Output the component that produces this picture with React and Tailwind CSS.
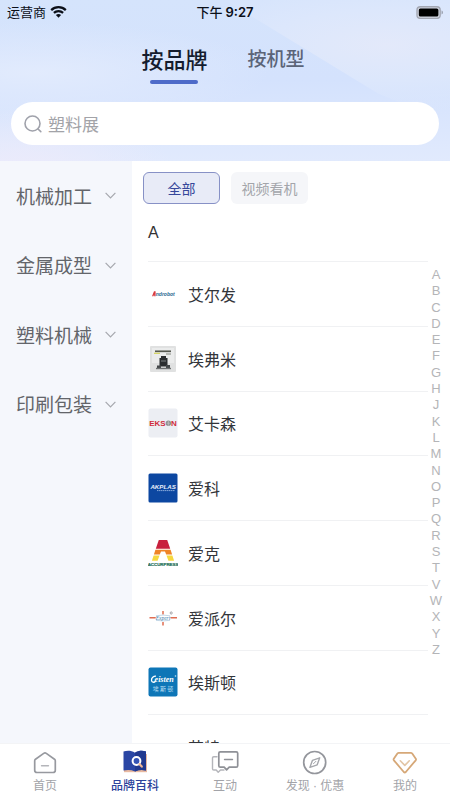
import React, { useState } from "react";

const categories = ["机械加工", "金属成型", "塑料机械", "印刷包装"];
const letters = "ABCDEFGHJKLMNOPQRSTVWXYZ".split("");

const WifiIcon = () => (
    <svg width="17" height="12" viewBox="0 0 17 12" fill="none" stroke="#0b0f18" aria-hidden="true">
        <path d="M1.2 4.1a10.4 10.4 0 0 1 14.6 0" strokeWidth="2.2" />
        <path d="M3.9 6.9a6.6 6.6 0 0 1 9.2 0" strokeWidth="2.2" />
        <path d="M8.5 11.8 5.9 9.1a3.8 3.8 0 0 1 5.2 0z" fill="#0b0f18" stroke="none" />
    </svg>
);

const BatteryIcon = () => (
    <svg width="27" height="13" viewBox="0 0 27 13" aria-hidden="true">
        <rect x="1" y="0.8" width="23.2" height="11.6" rx="3.4" fill="#d3d7e2" stroke="#a3a7b3" strokeWidth="1.4" />
        <rect x="2.8" y="2.4" width="19.6" height="8.2" rx="1.6" fill="#000" />
        <path d="M25.6 4.6v3.8c.8-.3 1.2-1 1.2-1.9s-.4-1.6-1.2-1.9z" fill="#8e93a0" />
    </svg>
);

const SearchIcon = () => (
    <svg width="18" height="18" viewBox="0 0 18 18" fill="none" stroke="#a0a2ab" strokeWidth="1.6" strokeLinecap="round" aria-hidden="true">
        <circle cx="8.5" cy="8.5" r="7.5" />
        <path d="m14 14 2.8 2.6" />
    </svg>
);

const ChevronIcon = () => (
    <svg width="11" height="7" viewBox="0 0 11 7" fill="none" stroke="#a6a8ae" strokeWidth="1.2" aria-hidden="true">
        <path d="M.6.8 5.5 5.8 10.4.8" />
    </svg>
);

const LogoAierfa = () => (
    <svg width="30" height="30" viewBox="0 0 30 30" aria-hidden="true">
        <path d="M4 17.2 6 12.2h1.6v5H6.2v-1.6L5.4 17.2z" fill="#d93a3f" />
        <text x="7.8" y="16.8" fontSize="5" fontWeight="700" fontStyle="italic" fill="#27678f" fontFamily="Liberation Sans, sans-serif">ndrobot</text>
    </svg>
);

const LogoAifumi = () => (
    <svg width="30" height="30" viewBox="0 0 30 30" aria-hidden="true">
        <rect x="2" y="2" width="26" height="26" rx="1" fill="#e0e1e1" />
        <rect x="4" y="4" width="22" height="15" fill="#ebecec" />
        <path d="M7 7.300h16" stroke="#55584f" strokeWidth="1.7" />
        <path d="M6 9.300h6" stroke="#d4d45a" strokeWidth="1.2" />
        <path d="M18 10h5" stroke="#84877f" strokeWidth="1" />
        <path d="M13 12h5v2h1.500v8.500h-8V14H13z" fill="#2b2e30" />
        <path d="M9 21.500h4V25H9zM18 21h4v4h-4z" fill="#44484a" />
        <path d="M8 24.500h15" stroke="#6d7071" strokeWidth="1.4" />
        <path d="M13 17h5" stroke="#7c8183" strokeWidth="1" />
    </svg>
);

const LogoEkson = () => (
    <svg width="30" height="30" viewBox="0 0 30 30" aria-hidden="true">
        <rect width="29" height="29" x=".5" y=".5" rx="2" fill="#eceef3" />
        <g fontSize="8" fontWeight="700" fill="#d02c3b" fontFamily="Liberation Sans, sans-serif">
            <text x="1.2" y="18">EKS</text>
            <text x="23" y="18">N</text>
        </g>
        <circle cx="20.4" cy="15.2" r="2.7" fill="#8e9192" />
        <path d="M18.8 15.2H22M20.4 12.500v5.400" stroke="#c7c9c8" strokeWidth=".6" />
    </svg>
);

const LogoAkplas = () => (
    <svg width="30" height="30" viewBox="0 0 30 30" aria-hidden="true">
        <rect width="29" height="29" x=".5" y=".5" rx="1.5" fill="#0c47a1" />
        <text x="2.4" y="15.8" fontSize="6.2" fontWeight="700" fontStyle="italic" fill="#eaf1fb" fontFamily="Liberation Sans, sans-serif">AKPLAS</text>
        <path d="M9 17.600h18" stroke="#86a8da" strokeWidth="1" strokeDasharray="1.5 .5" />
    </svg>
);

const LogoAccurpress = () => (
    <svg width="30" height="30" viewBox="0 0 30 30" aria-hidden="true">
        <path d="M10.8 2h8.400l3 8.800H7.800z" fill="#c8203c" />
        <path d="M7.400 11.800h15.200l1.500 4.700h-5.900L17 13.500h-4l-1.200 3H5.900z" fill="#ef8426" />
        <path d="M5.600 17.500h5.900l-1.900 5.300H3.900zM18.500 17.500h5.900l1.700 5.300h-5.700z" fill="#f6d83e" />
        <text x="15" y="28.2" textAnchor="middle" fontSize="4.4" fontWeight="700" fill="#1d6e58" stroke="#1d6e58" strokeWidth=".2" fontFamily="Liberation Sans, sans-serif">ACCURPRESS</text>
    </svg>
);

const LogoExpert = () => (
    <svg width="30" height="30" viewBox="0 0 30 30" aria-hidden="true">
        <path d="M1.5 14.800h6.200M22.500 14.800h6.500M15 8v3.500M15 19v3.500" stroke="#df6d52" strokeWidth="1.5" />
        <path d="M8 12.800q7-1.500 14 0M8 17.300q7 1.200 14 0" fill="none" stroke="#a9c6dd" strokeWidth=".7" />
        <text x="15" y="16.6" textAnchor="middle" fontSize="5.4" fontStyle="italic" fill="#3d7cab" fontFamily="Liberation Serif, serif">Expert</text>
        <circle cx="23.2" cy="10" r="1.1" fill="none" stroke="#83848b" strokeWidth=".7" />
    </svg>
);

const LogoEstun = () => (
    <svg width="30" height="30" viewBox="0 0 30 30" aria-hidden="true">
        <rect width="29" height="29" x=".5" y=".5" rx="2" fill="#0e76b7" />
        <path d="M8 9.200C5.500 9 3.400 11 3.500 13.200c.2 2.300 2.500 2.700 4 1" fill="none" stroke="#fff" strokeWidth="1.3" />
        <text x="6.6" y="15.4" fontSize="8" fontWeight="700" fontStyle="italic" fill="#fff" fontFamily="Liberation Serif, serif">eisten</text>
        <circle cx="27.5" cy="9" r=".8" fill="#cbe5f5" />
        <text x="15" y="23.8" textAnchor="middle" fontSize="6" fill="#b9dcf2" fontFamily="Noto Sans CJK SC, sans-serif">埃 斯 顿</text>
    </svg>
);

const brands = [
    { name: "艾尔发", Logo: LogoAierfa },
    { name: "埃弗米", Logo: LogoAifumi },
    { name: "艾卡森", Logo: LogoEkson },
    { name: "爱科", Logo: LogoAkplas },
    { name: "爱克", Logo: LogoAccurpress },
    { name: "爱派尔", Logo: LogoExpert },
    { name: "埃斯顿", Logo: LogoEstun },
    { name: "艾特", Logo: null },
];

const HomeIcon = () => (
    <svg width="26" height="26" viewBox="0 0 26 26" fill="none" stroke="#97999f" strokeWidth="1.7" strokeLinejoin="round" strokeLinecap="round" aria-hidden="true">
        <path d="M11.700 3.400 3.500 9.200c-.6.5-.8.9-.8 1.600v9.400c0 1.500.8 2.300 2.300 2.300h16c1.500 0 2.300-.8 2.300-2.300v-9.400c0-.7-.2-1.100-.8-1.600l-8.200-5.800c-.9-.6-1.700-.6-2.600 0z" />
        <path d="M9.500 15.800h7" strokeWidth="1.4" stroke="#b4b5ba" />
    </svg>
);

const BookIcon = () => (
    <svg width="26" height="26" viewBox="0 0 26 26" aria-hidden="true">
        <path d="M2 4h23v18.200H2z" fill="#e8b9a0" />
        <path d="M1.500 1.600c4-1.200 7.800-1 11.500 1.200 3.700-2.200 7.500-2.400 11-1.200v19c-3.500-1-7.300-.7-11 .8-3.700-1.500-7.500-1.800-11.500-.8z" fill="#2a46a4" />
        <path d="M13 2.800c3.700-2.200 7.500-2.400 11-1.200v19c-3.500-1-7.300-.7-11 .8z" fill="#21398f" />
        <circle cx="14.5" cy="11" r="3.9" fill="#3554b5" stroke="#fff" strokeWidth="2" />
        <path d="m17.600 14.200 2.200 2.400" stroke="#f0b694" strokeWidth="2.2" strokeLinecap="round" />
    </svg>
);

const ChatIcon = () => (
    <svg width="28" height="26" viewBox="0 0 28 26" fill="none" strokeLinejoin="round" strokeLinecap="round" aria-hidden="true">
        <path d="M6 6.700H2.800c-.9 0-1.300.4-1.300 1.300v10.700c0 .9.400 1.300 1.300 1.300h2.400l2 2.300 2.300-2.300h3.500" stroke="#b4b5ba" strokeWidth="1.4" />
        <path d="M9.300 1.800h15.900c1 0 1.500.5 1.500 1.500v12.400c0 1-.5 1.500-1.500 1.500h-7l-2.600 2.600-2.400-2.600H9.300c-1 0-1.500-.5-1.500-1.500V3.300c0-1 .5-1.500 1.500-1.500z" stroke="#8f9197" strokeWidth="1.7" />
        <path d="M13.500 9.500h8" stroke="#8f9197" strokeWidth="1.4" />
    </svg>
);

const CompassIcon = () => (
    <svg width="26" height="26" viewBox="0 0 26 26" fill="none" strokeLinejoin="round" aria-hidden="true">
        <circle cx="12.7" cy="12.5" r="11" stroke="#94969c" strokeWidth="1.7" />
        <path d="m17.700 7.800-2.500 7-7.300 2.600 2.500-7z" stroke="#a5a7ac" strokeWidth="1.4" />
        <path d="m11.200 14 3-3" stroke="#a5a7ac" strokeWidth="1" />
    </svg>
);

const GemIcon = () => (
    <svg width="26" height="26" viewBox="0 0 26 26" fill="none" strokeLinejoin="round" strokeLinecap="round" aria-hidden="true">
        <path d="M6.800 2.800h12c.6 0 1 .2 1.400.7l3.600 5.300c.4.6.3 1-.1 1.500L13.800 22c-.7.700-1.300.7-2 0L1.900 10.300c-.4-.5-.5-.9-.1-1.500l3.600-5.300c.4-.5.8-.7 1.400-.7z" stroke="#d6a878" strokeWidth="1.8" />
        <path d="m8.300 10.800 4.500 4.600 4.500-4.600" stroke="#e2c5a5" strokeWidth="1.6" />
    </svg>
);

const navItems = [
    { key: "home", label: "首页", Icon: HomeIcon },
    { key: "brand", label: "品牌百科", Icon: BookIcon },
    { key: "chat", label: "互动", Icon: ChatIcon },
    {
        key: "discover",
        // the CJK font draws a full-width middle dot, so the dot gets a Latin one
        label: (
            <span>
                发现<span className="font-['Liberation_Sans',sans-serif]"> · </span>优惠
            </span>
        ),
        Icon: CompassIcon,
    },
    { key: "mine", label: "我的", Icon: GemIcon },
];

const App = () => {
    const [keyword, setKeyword] = useState("");
    const [filter, setFilter] = useState("全部");

    return (
        <div className="flex h-screen flex-col overflow-hidden bg-white font-['Noto_Sans_CJK_SC',sans-serif]">
            {/* Header */}
            <header className="relative shrink-0 bg-linear-to-b from-[#d5e4fc] via-[#d4e2fd] to-[#e1eafd] pb-4">
                <div className="absolute inset-0 bg-[radial-gradient(ellipse_at_8%_45%,#e2ebfd_0%,transparent_40%)]" />
                <div className="absolute inset-0 bg-[radial-gradient(ellipse_at_86%_28%,#e3e9fa_0%,#dce7fc_22%,transparent_42%)] [clip-path:polygon(50%_0,100%_0,100%_100%,91%_66%,84%_58%)]" />
                <div className="absolute inset-0 bg-[radial-gradient(ellipse_at_5%_105%,#ecebfb_0%,transparent_25%)]" />

                <div className="relative">
                    <div className="grid h-6 grid-cols-3 items-center px-[7px] text-[13px] leading-6 text-[#0b0f18]">
                        <div className="flex items-center gap-1">
                            <span>运营商</span>
                            <WifiIcon />
                        </div>
                        <div className="text-center font-medium">
                            下午 <span className="font-['Inter',sans-serif] font-semibold">9:27</span>
                        </div>
                        <div className="flex justify-end">
                            <BatteryIcon />
                        </div>
                    </div>

                    <div className="flex h-[78px] justify-center gap-10 pt-[18px] pr-1">
                        <button type="button" className="flex flex-col items-center text-[22px] leading-8 font-medium text-[#141c2e]">
                            按品牌
                            <span className="mt-1.5 h-1 w-12 rounded-full bg-[#4e6bc9]" />
                        </button>
                        <button type="button" className="flex flex-col items-center text-[19px] leading-8 font-medium text-[#5b6478]">
                            按机型
                        </button>
                    </div>

                    <label className="mx-[11px] flex h-[43px] items-center gap-1.5 rounded-full bg-white pl-[13px]">
                        <SearchIcon />
                        <input
                            type="text"
                            aria-label="搜索"
                            placeholder="塑料展"
                            value={keyword}
                            onChange={(e) => setKeyword(e.target.value)}
                            className="min-w-0 flex-1 text-[17px] outline-none placeholder:text-[#a2a3a8]"
                        />
                    </label>
                </div>
            </header>

            {/* Content */}
            <main className="flex min-h-0 flex-1">
                <aside className="w-[132px] shrink-0 bg-[#f5f7fc]">
                    <div className="grid h-[278px] auto-rows-fr">
                        {categories.map((item) => (
                            <button
                                key={item}
                                type="button"
                                className="flex w-full items-center justify-between px-4 text-[19px] text-[#63656a]"
                            >
                                {item}
                                <ChevronIcon />
                            </button>
                        ))}
                    </div>
                </aside>

                <section className="relative min-w-0 flex-1 overflow-hidden pr-[22px] pl-4">
                    <div className="-ml-[5px] flex gap-[11px] pt-[11px]">
                        {["全部", "视频看机"].map((item) => (
                            <button
                                key={item}
                                type="button"
                                onClick={() => setFilter(item)}
                                className={
                                    filter === item
                                        ? "h-8 w-[77px] rounded-md border border-[#8791c6] bg-[#e8ebf7] text-sm text-[#36479a]"
                                        : "h-8 w-[77px] rounded-md bg-[#f5f6f9] text-sm text-[#a3a5aa]"
                                }
                            >
                                {item}
                            </button>
                        ))}
                    </div>

                    <h2 className="flex h-[57px] items-center font-['Liberation_Sans',sans-serif] text-base text-[#333]">A</h2>

                    <ul className="grid h-[518px] auto-rows-fr">
                        {brands.map(({ name, Logo }) => (
                            <li key={name} className="flex items-center gap-2.5 border-t border-[#f0f1f3] text-base text-[#33353a]">
                                <span className="size-[30px]">{Logo && <Logo />}</span>
                                {name}
                            </li>
                        ))}
                    </ul>

                    {/* Letter index floats over the right edge of the list */}
                    <nav aria-label="字母索引" className="absolute top-[106px] right-1 flex h-[391px] w-5 flex-col justify-between text-center font-['Liberation_Sans',sans-serif] text-[13px] leading-4 text-[#b4b5b8]">
                        {letters.map((letter) => (
                            <a key={letter} href={`#${letter}`}>
                                {letter}
                            </a>
                        ))}
                    </nav>
                </section>
            </main>

            {/* Bottom navigation */}
            <nav className="grid h-[57px] shrink-0 grid-cols-5 border-t border-[#f3f4f6] bg-white">
                {navItems.map(({ key, label, Icon }) => (
                    <a
                        key={key}
                        href={`#${key}`}
                        className={
                            key === "brand"
                                ? "flex flex-col items-center pt-1.5 text-xs leading-[18px] font-medium text-[#2c439c]"
                                : "flex flex-col items-center pt-1.5 text-xs leading-[18px] text-[#a2a3a8]"
                        }
                    >
                        <Icon />
                        {label}
                    </a>
                ))}
            </nav>
        </div>
    );
};

export default App;
